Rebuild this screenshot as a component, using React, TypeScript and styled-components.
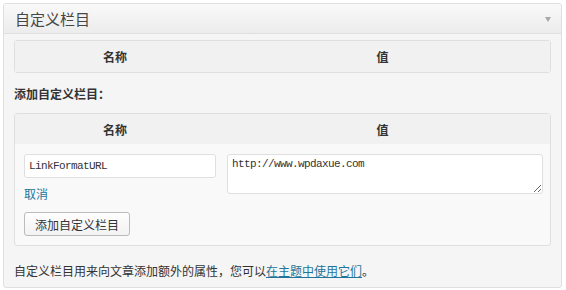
import React, {useState} from 'react';
import styled, {createGlobalStyle} from 'styled-components';

const GlobalStyle = createGlobalStyle`
  html, body {
    margin: 0;
    padding: 0;
    background: #fff;
  }
  body {
    font-family: "Noto Sans CJK SC", "Liberation Sans", sans-serif;
    font-size: 12px;
    color: #333;
  }
`;

const Page = styled.div`
  padding: 3px 4px 3px 3px;
`;

const Postbox = styled.div`
  width: 559px;
  box-sizing: border-box;
  border: 1px solid #dfdfdf;
  border-radius: 3px;
  background: #f5f5f5;
  box-shadow: inset 0 1px 0 #fff;
`;

const Header = styled.div`
  height: 29px;
  display: flex;
  align-items: center;
  justify-content: space-between;
  padding: 0 10px 0 11px;
  border-bottom: 1px solid #dfdfdf;
  background: linear-gradient(to bottom, #f9f9f9, #ececec);
  border-radius: 3px 3px 0 0;
`;

const Title = styled.h3`
  margin: 0;
  font-size: 15px;
  font-weight: normal;
  color: #464646;
  line-height: 20px;
`;

const Toggle = styled.span`
  width: 0;
  height: 0;
  border-left: 3px solid transparent;
  border-right: 3px solid transparent;
  border-top: 5px solid #a8a8a8;
  margin-top: 2px;
`;

const Body = styled.div`
  padding: 6px 10px 6px 10px;
  display: flex;
  flex-direction: column;
`;

const Table = styled.div`
  border: 1px solid #dfdfdf;
  border-radius: 3px;
  background: #f9f9f9;
  display: grid;
  grid-template-columns: 200px 1fr;
`;

const HeadCell = styled.div<{$h: number}>`
  height: ${p => p.$h}px;
  display: flex;
  align-items: center;
  justify-content: center;
  background: #f1f1f1;
  font-weight: bold;
  font-size: 12px;
  color: #333;
`;

const SubHeading = styled.p`
  margin: 11px 0 9px 0;
  font-weight: bold;
  font-size: 12px;
  line-height: 20px;
  color: #333;
`;

const LeftCell = styled.div`
  padding: 10px 0 9px 9px;
  display: flex;
  flex-direction: column;
  align-items: flex-start;
`;

const RightCell = styled.div`
  padding: 10px 7px 9px 12px;
`;

const TextInput = styled.input`
  box-sizing: border-box;
  width: 192px;
  height: 24px;
  border: 1px solid #dfdfdf;
  border-radius: 3px;
  background: #fff;
  padding: 0 4px;
  font-family: "Liberation Mono", monospace;
  font-size: 11px;
  letter-spacing: -0.6px;
  color: #333;
  outline: none;
`;

const TextArea = styled.textarea`
  display: block;
  box-sizing: border-box;
  width: 316px;
  height: 40px;
  border: 1px solid #dfdfdf;
  border-radius: 3px;
  background: #fff;
  padding: 3px 4px;
  font-family: "Liberation Mono", monospace;
  font-size: 11px;
  letter-spacing: -0.6px;
  color: #333;
  outline: none;
  margin: 0;
`;

const Link = styled.a`
  color: #21759b;
  text-decoration: none;
  font-size: 12px;
  line-height: 16px;
  margin-top: 8px;
  cursor: pointer;
`;

const Button = styled.button`
  margin-top: 10px;
  width: 106px;
  height: 24px;
  box-sizing: border-box;
  border: 1px solid #bbb;
  border-radius: 3px;
  background: linear-gradient(to bottom, #fefefe, #f2f2f2);
  font-family: "Noto Sans CJK SC", "Liberation Sans", sans-serif;
  font-size: 12px;
  color: #333;
  padding: 0;
  cursor: pointer;
`;

const Note = styled.p`
  margin: 15px 0 0 0;
  font-size: 12px;
  line-height: 20px;
  color: #333;
`;

const NoteLink = styled.a`
  color: #21759b;
  text-decoration: underline;
`;

export default function App() {
  const [name, setName] = useState('LinkFormatURL');
  const [value, setValue] = useState('http://www.wpdaxue.com');

  return (
    <Page>
      <GlobalStyle />
      <Postbox>
        <Header>
          <Title>自定义栏目</Title>
          <Toggle />
        </Header>
        <Body>
          <Table>
            <HeadCell $h={31}>名称</HeadCell>
            <HeadCell $h={31}>值</HeadCell>
          </Table>

          <SubHeading>添加自定义栏目：</SubHeading>

          <Table>
            <HeadCell $h={30}>名称</HeadCell>
            <HeadCell $h={30}>值</HeadCell>
            <LeftCell>
              <TextInput value={name} onChange={e => setName(e.target.value)} />
              <Link>取消</Link>
              <Button>添加自定义栏目</Button>
            </LeftCell>
            <RightCell>
              <TextArea value={value} onChange={e => setValue(e.target.value)} />
            </RightCell>
          </Table>

          <Note>
            自定义栏目用来向文章添加额外的属性，您可以<NoteLink>在主题中使用它们</NoteLink>。
          </Note>
        </Body>
      </Postbox>
    </Page>
  );
}
